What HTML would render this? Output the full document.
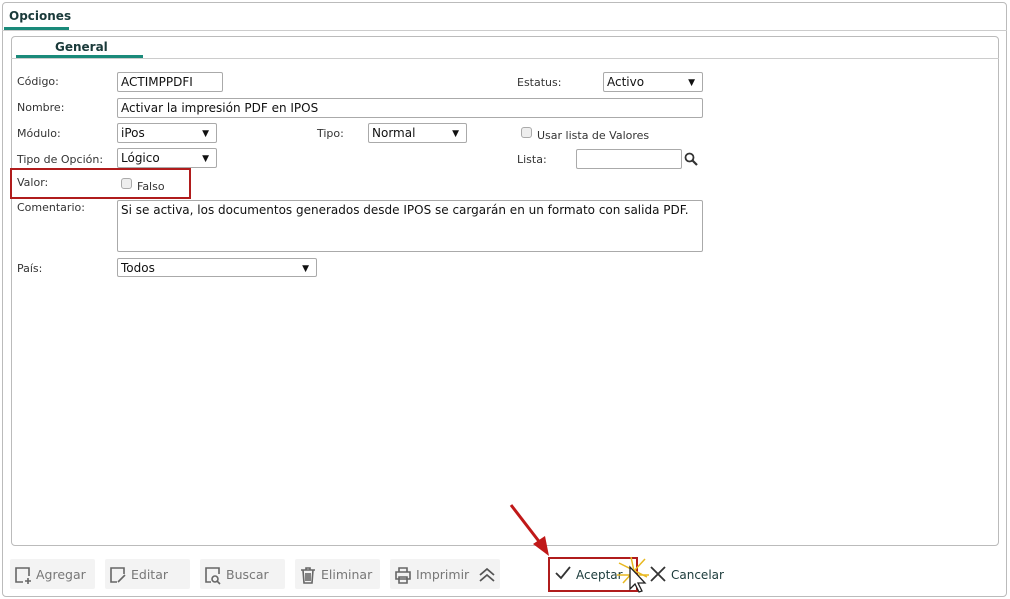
<!DOCTYPE html>
<html><head><meta charset="utf-8"><style>
*{margin:0;padding:0;box-sizing:border-box}
body{width:1010px;height:599px;background:#fff;font-family:"DejaVu Sans","Liberation Sans",sans-serif;position:relative;overflow:hidden;color:#333}
.a{position:absolute}
.lbl{position:absolute;font-size:11px;color:#333}
.inp{position:absolute;border:1px solid #aaa;border-radius:2px;background:#fff;font-size:12px;color:#111;padding:1px 3px;line-height:16px;white-space:nowrap}
.sel:after{content:"▼";position:absolute;right:7px;top:2px;font-size:9px;color:#111}
.btn{position:absolute;top:559px;height:30px;background:#f3f3f3;border-radius:2px;font-size:12.5px;color:#777;line-height:32px}
.btn span{position:absolute;left:26px}
.btn svg{position:absolute;left:3px;top:6px}
.cb{position:absolute;width:11px;height:11px;border:1px solid #aaa;border-radius:3px;background:#eee}
</style></head><body>
<div class="a" style="left:2px;top:2px;width:1005px;height:595px;border:1px solid #bbb;border-radius:4px"></div>
<div class="a" style="left:2px;top:30px;width:1005px;border-top:1px solid #ccc"></div>
<div class="lbl" style="left:9px;top:9px;font-weight:bold;font-size:12px;color:#1a3a3a">Opciones</div>
<div class="a" style="left:4px;top:27px;width:65px;height:3px;background:#1a8a7a"></div>

<div class="a" style="left:11px;top:36px;width:988px;height:510px;border:1px solid #bbb;border-radius:4px"></div>
<div class="a" style="left:11px;top:58px;width:988px;border-top:1px solid #ccc"></div>
<div class="lbl" style="left:55px;top:40px;font-weight:bold;font-size:12px;color:#1a3a3a">General</div>
<div class="a" style="left:16px;top:55px;width:127px;height:3px;background:#1a8a7a"></div>

<div class="lbl" style="left:17px;top:75px">Código:</div>
<div class="inp" style="left:117px;top:72px;width:106px;height:20px">ACTIMPPDFI</div>
<div class="lbl" style="left:517px;top:76px">Estatus:</div>
<div class="inp sel" style="left:603px;top:72px;width:100px;height:20px">Activo</div>

<div class="lbl" style="left:17px;top:101px">Nombre:</div>
<div class="inp" style="left:117px;top:98px;width:586px;height:20px">Activar la impresión PDF en IPOS</div>

<div class="lbl" style="left:17px;top:127px">Módulo:</div>
<div class="inp sel" style="left:117px;top:123px;width:100px;height:20px">iPos</div>
<div class="lbl" style="left:317px;top:127px">Tipo:</div>
<div class="inp sel" style="left:368px;top:123px;width:99px;height:20px">Normal</div>
<div class="cb" style="left:521px;top:127px"></div>
<div class="lbl" style="left:537px;top:129px">Usar lista de Valores</div>

<div class="lbl" style="left:17px;top:153px">Tipo de Opción:</div>
<div class="inp sel" style="left:117px;top:148px;width:100px;height:20px">Lógico</div>
<div class="lbl" style="left:517px;top:153px">Lista:</div>
<div class="inp" style="left:576px;top:149px;width:106px;height:20px"></div>
<svg class="a" style="left:684px;top:152px" width="14" height="14" viewBox="0 0 14 14"><circle cx="5.5" cy="5.5" r="4" fill="none" stroke="#333" stroke-width="1.8"/><path d="M8.5 8.5L13 13" stroke="#333" stroke-width="2.2"/></svg>

<div class="lbl" style="left:17px;top:176px">Valor:</div>
<div class="cb" style="left:121px;top:178px"></div>
<div class="lbl" style="left:137px;top:180px">Falso</div>
<div class="a" style="left:10px;top:168px;width:181px;height:31px;border:2px solid #b01c1c"></div>

<div class="lbl" style="left:17px;top:201px">Comentario:</div>
<div class="inp" style="left:117px;top:200px;width:586px;height:52px">Si se activa, los documentos generados desde IPOS se cargarán en un formato con salida PDF.</div>

<div class="lbl" style="left:17px;top:262px">País:</div>
<div class="inp sel" style="left:117px;top:258px;width:200px;height:19px">Todos</div>

<div class="btn" style="left:10px;width:85px"><svg width="20" height="20" viewBox="0 0 20 20" fill="none" stroke="#666" stroke-width="1.6"><path d="M10 17H3V3h13v8"/><path d="M15 13v6M12 16h6"/></svg><span>Agregar</span></div>
<div class="btn" style="left:105px;width:85px"><svg width="20" height="20" viewBox="0 0 20 20" fill="none" stroke="#666" stroke-width="1.6"><path d="M9 17H3V3h13v6"/><path d="M10 17l7-7"/></svg><span>Editar</span></div>
<div class="btn" style="left:200px;width:85px"><svg width="20" height="20" viewBox="0 0 20 20" fill="none" stroke="#666" stroke-width="1.6"><path d="M8 17H3V3h13v6"/><circle cx="12" cy="14" r="3"/><path d="M14 16l3 3"/></svg><span>Buscar</span></div>
<div class="btn" style="left:295px;width:85px"><svg width="20" height="20" viewBox="0 0 20 20" fill="none" stroke="#666" stroke-width="1.6"><path d="M3 5h14M8 5V3h4v2M5 5l1 13h8l1-13M8 8v8M10 8v8M12 8v8"/></svg><span>Eliminar</span></div>
<div class="btn" style="left:390px;width:110px"><svg width="20" height="20" viewBox="0 0 20 20" fill="none" stroke="#666" stroke-width="1.6"><path d="M6 7V3h8v4M3 7h14v7H3zM6 12h8v6H6z"/></svg><span>Imprimir</span><svg style="left:88px;top:8px" width="18" height="16" viewBox="0 0 18 16" fill="none" stroke="#555" stroke-width="1.8"><path d="M2 8l7-6 7 6M2 14l7-6 7 6"/></svg></div>

<svg class="a" style="left:555px;top:566px" width="16" height="14" viewBox="0 0 16 14" fill="none" stroke="#333" stroke-width="1.8"><path d="M1 7l5 5L15 1"/></svg>
<div class="lbl" style="left:576px;top:568px;font-size:12px;color:#1a3a3a">Aceptar</div>
<div class="a" style="left:548px;top:557px;width:90px;height:35px;border:2px solid #b01c1c"></div>
<svg class="a" style="left:650px;top:566px" width="16" height="16" viewBox="0 0 16 16" stroke="#333" stroke-width="1.8"><path d="M1 1l14 14M15 1L1 15"/></svg>
<div class="lbl" style="left:671px;top:568px;font-size:12px;color:#1a3a3a">Cancelar</div>
<svg class="a" style="left:615px;top:555px" width="40" height="44" viewBox="0 0 40 44"><g stroke="#e8b820" stroke-width="1.5"><path d="M4 8l28 14M16 2l6 28M30 4L8 28M2 20h32"/></g><path d="M15 12v22l5-5 4 8 3-1-4-8h7z" fill="#fff" stroke="#222" stroke-width="1.3"/></svg>
<svg class="a" style="left:505px;top:500px" width="50" height="60" viewBox="0 0 50 60"><path d="M6 5L36 44" stroke="#c01818" stroke-width="3"/><path d="M28 44l16 12-4-20z" fill="#c01818"/></svg>
</body></html>
